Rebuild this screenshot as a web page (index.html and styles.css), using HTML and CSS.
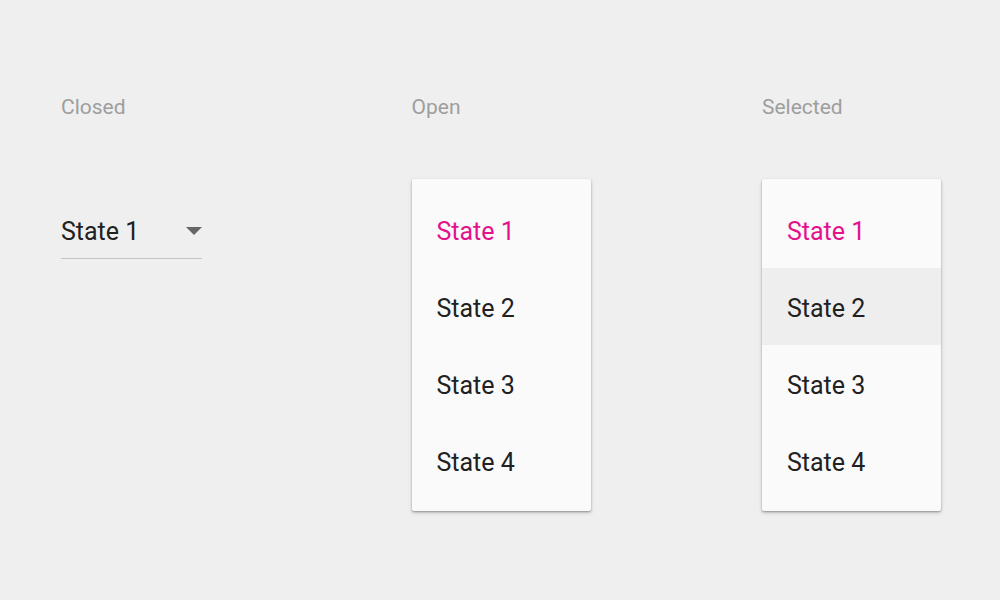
FILE: index.html
```html
<!DOCTYPE html>
<html lang="en">
<head>
    <meta charset="UTF-8">
    <title>Dropdown states</title>
    <link rel="stylesheet" href="styles.css">
</head>
<body>

<div class="states">
    <div class="column">
        <div class="label">Closed</div>
        <div class="field">
            <span>State 1</span>
            <svg class="arrow" width="16" height="8" viewBox="0 0 16 8"><path d="M0 0 L16 0 L8 8 Z" fill="#666"/></svg>
        </div>
    </div>

    <div class="column">
        <div class="label">Open</div>
        <div class="menu">
            <div class="item current">State 1</div>
            <div class="item">State 2</div>
            <div class="item">State 3</div>
            <div class="item">State 4</div>
        </div>
    </div>

    <div class="column">
        <div class="label">Selected</div>
        <div class="menu">
            <div class="item current">State 1</div>
            <div class="item hover">State 2</div>
            <div class="item">State 3</div>
            <div class="item">State 4</div>
        </div>
    </div>
</div>

</body>
</html>
```

FILE: styles.css
```css
body {
    margin: 0;
    min-height: 600px;
    background-color: #efefef;
    font-family: Roboto, "Liberation Sans", Arial, sans-serif;
    color: #212121;
}
.states {
    display: flex;
    padding: 95px 0 60px 61px;
}
.column {
    width: 350.5px;
    flex-shrink: 0;
}
.column:last-child {
    width: auto;
}
.label {
    font-size: 21px;
    line-height: 24px;
    color: #9e9e9e;
}
.field {
    display: flex;
    align-items: center;
    justify-content: space-between;
    width: 141px;
    margin-top: 91px;
    height: 42px;
    padding-bottom: 6px;
    border-bottom: 1px solid #c4c4c4;
    font-size: 25px;
}
.menu {
    width: 179px;
    margin-top: 60px;
    padding: 12px 0;
    background-color: #fafafa;
    border-radius: 2px;
    box-shadow: 0 1px 2px rgba(0, 0, 0, 0.3), 0 2px 4px rgba(0, 0, 0, 0.15);
}
.item {
    height: 73px;
    line-height: 73px;
    padding: 4px 0 0 25px;
    font-size: 25px;
}
.item.current {
    color: #e3128c;
}
.item.hover {
    background-color: #eeeeee;
}
```
